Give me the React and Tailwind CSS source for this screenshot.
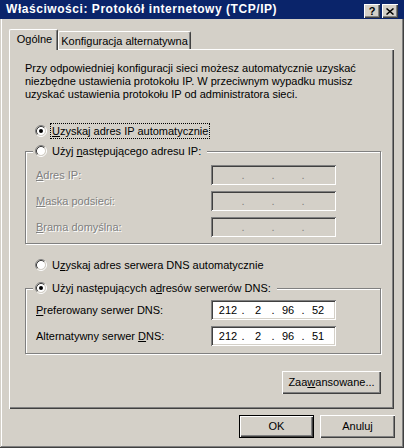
import React from 'react';

const raised = 'shadow-[inset_1px_1px_#ffffff,inset_-1px_-1px_#404040,inset_-2px_-2px_#808080]';
const sunken = 'shadow-[inset_1px_1px_#808080,inset_-1px_-1px_#ffffff,inset_2px_2px_#404040,inset_-2px_-2px_#d4d0c8]';
const disabledText = 'text-[#808080] [text-shadow:1px_1px_0_#ffffff]';

const Radio = ({ checked }) => (
  <svg width="12" height="12" viewBox="0 0 12 12" className="shrink-0">
    <circle cx="6" cy="6" r="4" fill="#ffffff" />
    <path d="M2.11 9.89A5.5 5.5 0 0 1 9.89 2.11" stroke="#808080" fill="none" />
    <path d="M9.89 2.11A5.5 5.5 0 0 1 2.11 9.89" stroke="#ffffff" fill="none" />
    <path d="M2.82 9.18A4.5 4.5 0 0 1 9.18 2.82" stroke="#404040" fill="none" />
    <path d="M9.18 2.82A4.5 4.5 0 0 1 2.82 9.18" stroke="#d4d0c8" fill="none" />
    {checked && <circle cx="6" cy="6" r="2" fill="#000000" />}
  </svg>
);

const IpField = ({ values, disabled }) => (
  <div className={`w-[125px] h-[20px] flex items-center pl-[4px] ${disabled ? 'bg-[#d4d0c8]' : 'bg-white'} ${sunken}`}>
    {[0, 1, 2, 3].map((i) => (
      <React.Fragment key={i}>
        <span className="w-[26px] text-center">{values ? values[i] : ''}</span>
        {i < 3 && (
          <span className={`w-[4px] text-center ${disabled ? 'text-[#808080]' : 'text-black'}`}>.</span>
        )}
      </React.Fragment>
    ))}
  </div>
);

const FieldRow = ({ label, values, disabled }) => (
  <div className="flex items-center h-[20px]">
    <span className={`w-[175px] ${disabled ? disabledText : ''}`}>{label}</span>
    <IpField values={values} disabled={disabled} />
  </div>
);

const Button = ({ children, def, className = '' }) => (
  <div
    className={`h-[23px] flex items-center justify-center ${
      def ? 'border border-black shadow-[inset_1px_1px_#ffffff,inset_-1px_-1px_#404040,inset_-2px_-2px_#808080]' : raised
    } ${className}`}
  >
    {children}
  </div>
);

const groupBox = 'border border-[#808080] shadow-[inset_1px_1px_#ffffff,1px_1px_#ffffff] w-[356px] min-w-0 pl-[10px]';

export default function App() {
  return (
    <div className="w-[404px] h-[448px] bg-[#d4d0c8] flex flex-col text-[11px] leading-[13px] text-black font-['Liberation_Sans',Arial,sans-serif] shadow-[inset_-1px_-1px_#404040,inset_1px_1px_#d4d0c8,inset_-2px_-2px_#808080,inset_2px_2px_#ffffff] overflow-hidden select-none">
      {/* title bar */}
      <div className="h-[19px] shrink-0 bg-[#0a246a] flex items-start pl-[6px] pr-[6px]">
        <span className="flex-1 text-white font-bold text-[12px] tracking-[0.55px] leading-[19px] whitespace-nowrap">
          Właściwości: Protokół internetowy (TCP/IP)
        </span>
        <div className={`mt-[4px] w-[16px] h-[14px] bg-[#d4d0c8] flex items-center justify-center font-bold text-[11px] leading-none ${raised}`}>
          ?
        </div>
        <div className={`mt-[4px] ml-[2px] w-[16px] h-[14px] bg-[#d4d0c8] flex items-center justify-center ${raised}`}>
          <svg width="8" height="7" viewBox="0 0 8 7">
            <path d="M0.5 0.5L7.5 6.5M7.5 0.5L0.5 6.5" stroke="#000" strokeWidth="1.5" />
          </svg>
        </div>
      </div>

      {/* tabs */}
      <div className="mt-[10px] h-[20px] pl-[9px] flex items-end shrink-0">
        <div className="relative z-10 -mb-px w-[49px] h-[21px] bg-[#d4d0c8] border-l border-t border-white border-r border-r-[#404040] shadow-[inset_-1px_0_#808080] rounded-tl-[2px] rounded-tr-[2px] flex justify-center pt-[3px] pl-[2px]">
          Ogólne
        </div>
        <div className="w-[133px] h-[18px] border-l border-t border-white border-r border-r-[#404040] shadow-[inset_-1px_0_#808080] rounded-tl-[2px] rounded-tr-[2px] flex justify-center pt-[3px]">
          Konfiguracja alternatywna
        </div>
      </div>

      {/* panel */}
      <div className="ml-[9px] w-[385px] h-[360px] shrink-0 flex flex-col pl-[16px] shadow-[inset_1px_1px_#ffffff,inset_-1px_-1px_#404040,inset_-2px_-2px_#808080]">
        <p className="mt-[13px]">
          Przy odpowiedniej konfiguracji sieci możesz automatycznie uzyskać
          <br />
          niezbędne ustawienia protokołu IP. W przeciwnym wypadku musisz
          <br />
          uzyskać ustawienia protokołu IP od administratora sieci.
        </p>

        <div className="mt-[23px] h-[14px] flex items-center pl-[10px]">
          <Radio checked />
          <span className="ml-[4px] pl-[1px] pr-[1px] leading-[14px] outline-1 outline-dotted outline-black">
            <u>U</u>zyskaj adres IP automatycznie
          </span>
        </div>

        <fieldset className={`mt-[6px] pt-[7px] pb-[6px] ${groupBox}`}>
          <legend className="-ml-[3px] pl-[2px] pr-[6px] bg-[#d4d0c8]">
            <div className="flex items-center h-[14px]">
              <Radio />
              <span className="ml-[5px]">
                Użyj <u>n</u>astępującego adresu IP:
              </span>
            </div>
          </legend>
          <div className="flex flex-col gap-[6px]">
            <FieldRow disabled label={<><u>A</u>dres IP:</>} />
            <FieldRow disabled label={<><u>M</u>aska podsieci:</>} />
            <FieldRow disabled label={<><u>B</u>rama domyślna:</>} />
          </div>
        </fieldset>

        <div className="mt-[14px] h-[14px] flex items-center pl-[10px]">
          <Radio />
          <span className="ml-[5px]">
            U<u>z</u>yskaj adres serwera DNS automatycznie
          </span>
        </div>

        <fieldset className={`mt-[9px] pt-[5px] pb-[7px] ${groupBox}`}>
          <legend className="-ml-[3px] pl-[2px] pr-[6px] bg-[#d4d0c8]">
            <div className="flex items-center h-[14px]">
              <Radio checked />
              <span className="ml-[5px]">
                Użyj następujących a<u>d</u>resów serwerów DNS:
              </span>
            </div>
          </legend>
          <div className="flex flex-col gap-[6px]">
            <FieldRow label={<><u>P</u>referowany serwer DNS:</>} values={['212', '2', '96', '52']} />
            <FieldRow label={<>Alternatywny serwer <u>D</u>NS:</>} values={['212', '2', '96', '51']} />
          </div>
        </fieldset>

        <div className="mt-[17px] w-[356px] flex justify-end">
          <Button className="w-[99px]">
            Zaa<u>w</u>ansowane...
          </Button>
        </div>
      </div>

      {/* dialog buttons */}
      <div className="mt-[6px] flex justify-end gap-[6px] pr-[9px]">
        <Button def className="w-[75px]">OK</Button>
        <Button className="w-[75px]">Anuluj</Button>
      </div>
    </div>
  );
}
